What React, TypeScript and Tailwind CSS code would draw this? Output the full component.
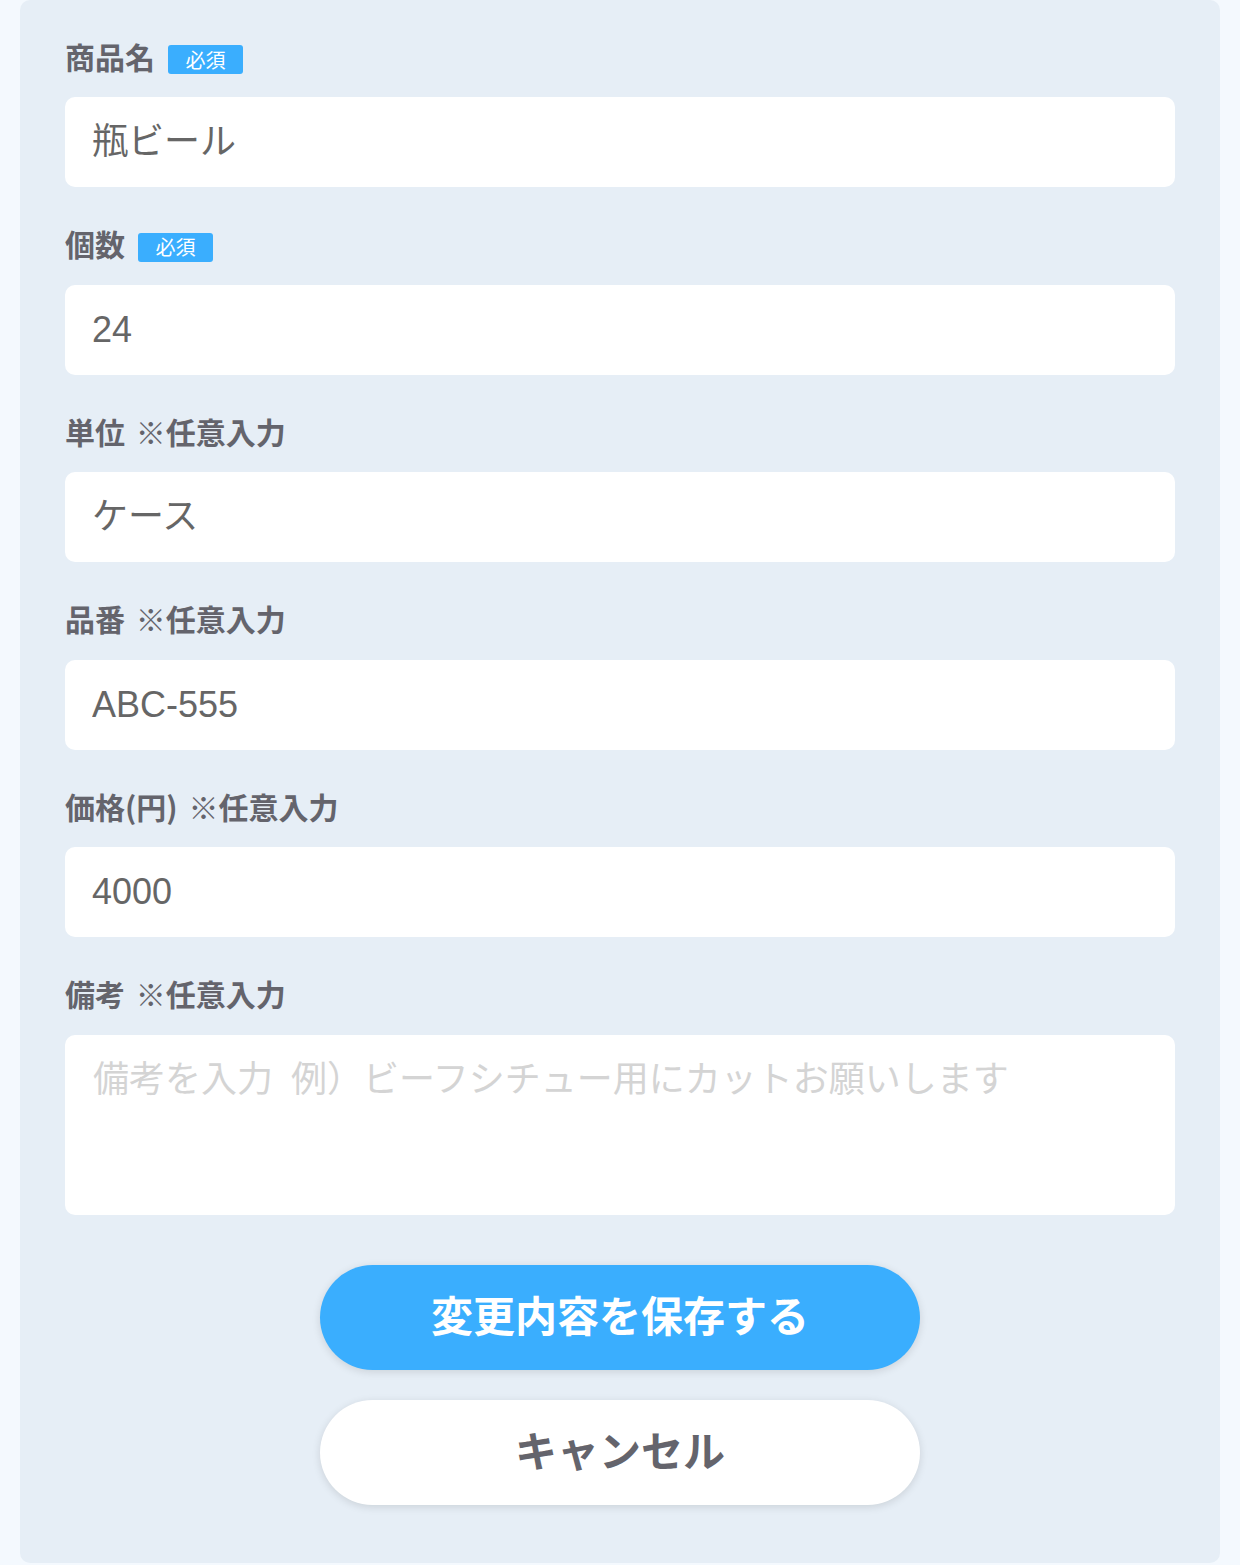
import React from "react";

const font = "font-['Liberation_Sans','Noto_Sans_CJK_JP',sans-serif]";

const Badge = () => (
  <span className="mt-[3px] ml-[13px] inline-flex h-[29px] w-[75px] items-center justify-center rounded-[3px] bg-[#3aaefe] text-[20px] font-normal leading-none text-white">
    必須
  </span>
);

const Label = ({ text, required }: { text: string; required?: boolean }) => (
  <div className="mb-[20px] flex h-[38px] items-center font-['Noto_Sans_CJK_JP',sans-serif] text-[30px] font-bold text-[#64646c] [word-spacing:4px]">
    <span className="mb-[4px]">{text}</span>
    {required && <Badge />}
  </div>
);

const Field = ({
  label,
  value,
  required,
  jp,
}: {
  label: string;
  value: string;
  required?: boolean;
  jp?: boolean;
}) => (
  <div className="mb-[39.6px]">
    <Label text={label} required={required} />
    <input
      defaultValue={value}
      className={`${font} block h-[90px] w-full rounded-[10px] bg-white px-[27px] text-[36px] text-[#666] outline-none ${jp ? "pb-[9px]" : ""}`}
    />
  </div>
);

export default function App() {
  return (
    <div className={`${font} min-h-[1565px] bg-[#f4f9fe] px-[20px]`}>
      <div className="rounded-[10px] bg-[#e6eef6] px-[45px] pt-[39px] pb-[58px]">
        <Field label="商品名" value="瓶ビール" required jp />
        <Field label="個数" value="24" required />
        <Field label="単位 ※任意入力" value="ケース" jp />
        <Field label="品番 ※任意入力" value="ABC-555" />
        <Field label="価格(円) ※任意入力" value="4000" />
        <div>
          <Label text="備考 ※任意入力" />
          <textarea
            placeholder="備考を入力 例）ビーフシチュー用にカットお願いします"
            className={`${font} block h-[180px] w-full resize-none rounded-[10px] bg-white px-[28px] pt-[18px] text-[36px] leading-[1.5] text-[#666] outline-none [word-spacing:8px] placeholder:text-[#d4d4d4]`}
          />
        </div>
        <div className="mt-[50px] flex flex-col items-center gap-[30px]">
          <button className="h-[105px] w-[600px] rounded-full bg-[#3aaefe] text-[42px] font-bold text-white shadow-[0_2px_8px_rgba(0,0,0,0.12)]">
            変更内容を保存する
          </button>
          <button className="h-[105px] w-[600px] rounded-full bg-white text-[42px] font-bold text-[#64646c] shadow-[0_2px_8px_rgba(0,0,0,0.12)]">
            キャンセル
          </button>
        </div>
      </div>
    </div>
  );
}
